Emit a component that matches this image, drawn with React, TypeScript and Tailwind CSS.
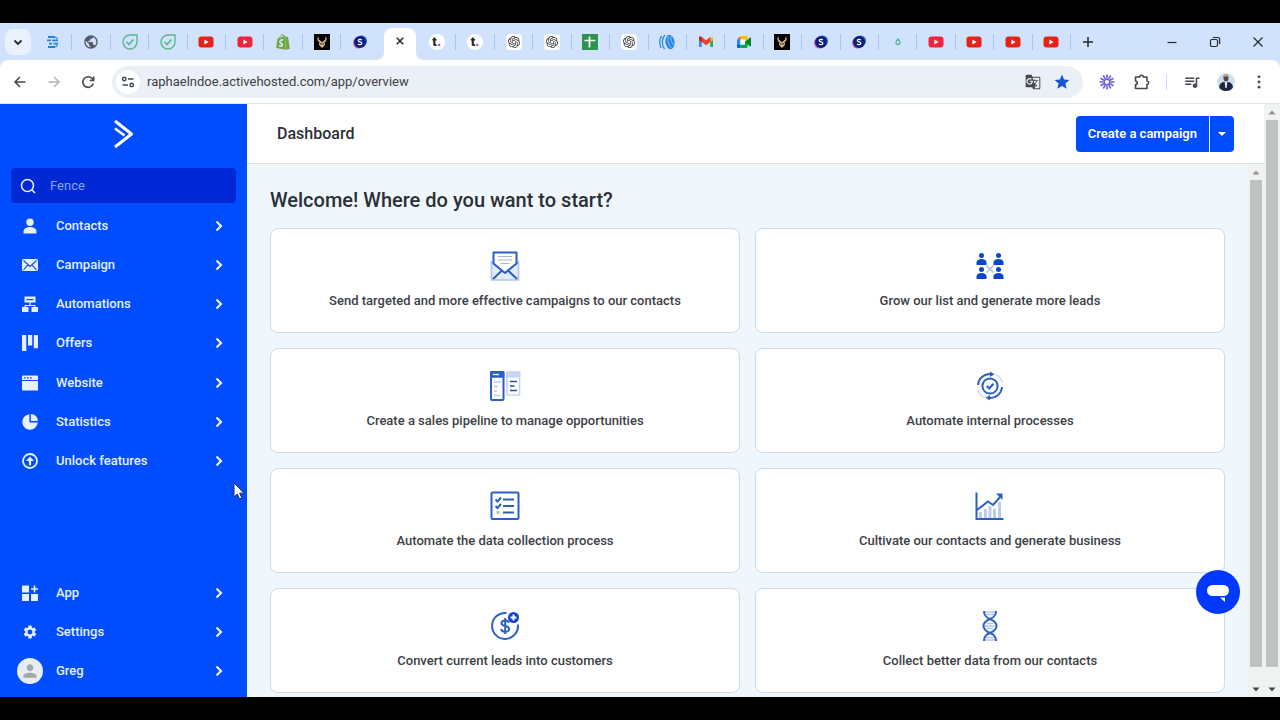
import type { ReactNode } from "react";
import { FaShopify } from "react-icons/fa";
import { SiOpenai } from "react-icons/si";
import { MdQueueMusic, MdGTranslate, MdStar, MdSettings, MdPerson, MdPublic } from "react-icons/md";

/* ---------- favicons ---------- */

const DocsFav = () => (
  <svg viewBox="0 0 16 16" className="size-4">
    <g stroke="#2583d8" strokeWidth="1.8" fill="none">
      <path d="M3 3h7M2 6.400h4M7 6.400h6M4 9.600h3M8.500 9.600H13M3 13h7" />
      <path d="M9.500 3c1.500 0 2.500 1 3 2.400M9.500 13c1.500 0 2.500-1 3-2.400" strokeWidth="1.200" />
    </g>
  </svg>
);
const GlobeFav = () => <MdPublic className="size-4 text-[#545b66]" />;
const CheckFav = () => (
  <svg viewBox="0 0 16 16" className="size-4" fill="none" stroke="#5cb88a" strokeWidth="1.4">
    <path d="M8 1h7v7a7 7 0 1 1-7-7z" />
    <path d="m4.600 8 2.400 2.500 4.400-5" strokeWidth="1.8" />
  </svg>
);
const TubeFav = ({ tone }: { tone: string }) => (
  <svg viewBox="0 0 16 12" className="h-3 w-4">
    <rect x="0.5" y="0.5" width="15" height="11" rx="3" fill={tone} />
    <path d="M6.400 3.600v4.800L10.600 6z" fill="#fff" />
  </svg>
);
const RedTube = () => <TubeFav tone="#e62117" />;
const PinkTube = () => <TubeFav tone="#ef233c" />;
const ShopFav = () => <FaShopify className="size-4 text-[#6fa83c]" />;
const BullFav = () => (
  <svg viewBox="0 0 16 16" className="size-4">
    <path fill="#000" d="M0 0h16v16H0z" />
    <path d="M4.500 3.500c-1 1.800-.4 3.200 1.200 4M11.500 3.500c1 1.800.4 3.200-1.200 4M5 6.500 8 9l3-2.500M5.800 8.500v2.200L8 13l2.200-2.300V8.500M8 8.500v4" fill="none" stroke="#d9b98c" strokeWidth="1.400" />
  </svg>
);
const SFav = () => (
  <svg viewBox="0 0 16 16" className="size-4">
    <circle cx="6.500" cy="9" r="5.500" fill="#d0659a" />
    <circle cx="9.500" cy="7" r="5.500" fill="#2463c7" />
    <circle cx="8" cy="8" r="6" fill="#0c1f80" />
    <path d="M9.800 6C9 5 6.300 5 6.300 6.700 6.300 8.300 9.800 7.600 9.800 9.300 9.800 11 7 11 6 9.900" fill="none" stroke="#fff" strokeWidth="1.300" />
  </svg>
);
const TFav = () => (
  <span className="flex size-4 items-center justify-center rounded-full bg-white font-['Inter',sans-serif] text-xs leading-none font-extrabold text-[#222]">
    t<span className="text-[#e0318c]">.</span>
  </span>
);
const AiFav = () => (
  <span className="flex size-4 items-center justify-center rounded-sm bg-white">
    <SiOpenai className="size-3 text-[#333]" />
  </span>
);
const SheetFav = () => (
  <svg viewBox="0 0 16 16" className="size-4">
    <path fill="#2c9350" d="M0 0h16v16H0z" />
    <path d="M7.500 2.500v11M2.500 6.500h11" stroke="#fff" strokeWidth="1.700" />
  </svg>
);
const WaveFav = () => (
  <svg viewBox="0 0 16 16" className="size-4" fill="none" stroke="#2587e8">
    <ellipse cx="11" cy="8" rx="4.500" ry="7.200" fill="#2587e8" stroke="none" transform="rotate(-8 11 8)" />
    <path d="M6 1C2.500 4.500 2.500 11 5.500 15M2.500 2C.2 5 .2 10.500 2 14" strokeWidth="1.300" />
    <path d="M9.500 2c-1.500 4 0 9 3 12M12 1.500c-.6 3 .4 7 2.500 9.500" stroke="#b9d9fa" strokeWidth=".7" />
  </svg>
);
const MailFav = () => (
  <svg viewBox="0 0 16 12" className="h-3 w-4">
    <path d="M1 1.800V11h2.800V5z" fill="#4285f4" />
    <path d="M15 1.800V11h-2.800V5z" fill="#34a853" />
    <path d="M12.200 5V2L15 1.200V4l-2.800 2.400z" fill="#fbbc04" />
    <path d="M1 4V1.800C1 .4 2.600 0 3.600.8L8 4.200 12.400.8l.2 5.200L8 9.200 3.800 6z" fill="#ea4335" />
    <path d="M1 4V1.800C1 .9 2 .4 3 .7l.8 1.200v4.300z" fill="#c5221f" />
  </svg>
);
const MeetFav = () => (
  <svg viewBox="0 0 16 14" className="h-3.5 w-4">
    <path d="M4.500 1v3.800H1z" fill="#ea4335" />
    <path d="M4.500 1H10c1 0 1.600.4 1.600 1.600V6L9 7V4.500H4.500z" fill="#fbbc04" />
    <path d="M1 4.800h3.500v5H1z" fill="#2684fc" />
    <path d="M1 9.500h3.500V13H2.300C1.400 13 1 12.500 1 11.700z" fill="#0066da" />
    <path d="M4.500 4.500H9v5.300H4.500z" fill="#fff" />
    <path d="M4.500 9.800H9V7l2.600-1v5.500c0 1-.6 1.500-1.600 1.500H4.500z" fill="#00ac47" />
    <path d="M9 7l4.800-4.200c.6-.4 1.200-.2 1.200.6v7.200c0 .8-.6 1-1.200.6z" fill="#00832d" />
  </svg>
);
const DropFav = () => (
  <svg viewBox="0 0 16 16" className="size-4">
    <path d="M8 5c1.200 1.400 2 2.400 2 3.600a2 2 0 0 1-4 0C6 7.400 6.800 6.400 8 5z" fill="none" stroke="#55b59a" strokeWidth="1.300" />
  </svg>
);
const CloseMark = () => (
  <svg viewBox="0 0 16 16" className="size-4" stroke="#26282c" strokeWidth="1.600">
    <path d="m4.800 4.800 6.400 6.400M11.200 4.800l-6.400 6.400" />
  </svg>
);

type Tab = { name: string; icon: () => ReactNode; active?: boolean };
const tabs: Tab[] = [
  { name: "Docs", icon: DocsFav },
  { name: "Web", icon: GlobeFav },
  { name: "Tasks", icon: CheckFav },
  { name: "Tasks", icon: CheckFav },
  { name: "Video", icon: RedTube },
  { name: "Video", icon: PinkTube },
  { name: "Shop", icon: ShopFav },
  { name: "Bull", icon: BullFav },
  { name: "S", icon: SFav },
  { name: "Close tab", icon: CloseMark, active: true },
  { name: "T", icon: TFav },
  { name: "T", icon: TFav },
  { name: "Chat", icon: AiFav },
  { name: "Chat", icon: AiFav },
  { name: "Sheet", icon: SheetFav },
  { name: "Chat", icon: AiFav },
  { name: "Wave", icon: WaveFav },
  { name: "Mail", icon: MailFav },
  { name: "Meet", icon: MeetFav },
  { name: "Bull", icon: BullFav },
  { name: "S", icon: SFav },
  { name: "S", icon: SFav },
  { name: "Drop", icon: DropFav },
  { name: "Video", icon: PinkTube },
  { name: "Video", icon: RedTube },
  { name: "Video", icon: RedTube },
  { name: "Video", icon: RedTube },
];

function TabStrip() {
  return (
    <div className="flex h-[37px] shrink-0 items-stretch bg-[#d1e2fc]">
      <div className="flex w-[34px] shrink-0 items-center pl-[5px]">
        <button aria-label="Search tabs" className="flex size-[26px] items-center justify-center rounded-lg bg-[#e9f1fd]">
          <svg viewBox="0 0 12 12" className="size-3" fill="none" stroke="#26282c" strokeWidth="1.800">
            <path d="m2.500 4.500 3.500 3.400 3.500-3.400" />
          </svg>
        </button>
      </div>
      <div className="flex min-w-0 flex-1">
        {tabs.map((tab, i) => {
          const Icon = tab.icon;
          if (tab.active) {
            return (
              <div key={i} className="flex flex-1 items-end">
                <svg viewBox="0 0 8 8" className="-ml-1 size-2 shrink-0" fill="#fff">
                  <path d="M8 0v8H0c5 0 8-3 8-8z" />
                </svg>
                <button aria-label={tab.name} className="flex h-8 min-w-0 flex-1 items-center justify-center rounded-t-lg bg-white pb-1.5">
                  <Icon />
                </button>
                <svg viewBox="0 0 8 8" className="-mr-1.5 size-2 shrink-0" fill="#fff">
                  <path d="M0 0v8h8C3 8 0 5 0 0z" />
                </svg>
              </div>
            );
          }
          const divided = !tabs[i + 1]?.active;
          return (
            <div key={i} className="flex flex-1 items-center">
              <button aria-label={tab.name} className="flex flex-1 justify-center">
                <Icon />
              </button>
              <span className={divided ? "h-4 w-px bg-[#a9c3f2]" : "h-4 w-px"} />
            </div>
          );
        })}
      </div>
      <div className="flex w-[209px] shrink-0 items-center justify-between pr-3.5 pl-[9px] text-[#26282c]">
        <button aria-label="New tab">
          <svg viewBox="0 0 16 16" className="size-4" stroke="currentColor" strokeWidth="1.500">
            <path d="M8 3v10M3 8h10" />
          </svg>
        </button>
        <div className="flex items-center gap-[27px]">
          <button aria-label="Minimize">
            <svg viewBox="0 0 16 16" className="size-4" stroke="currentColor" strokeWidth="1.200">
              <path d="M3.500 8.500h9" />
            </svg>
          </button>
          <button aria-label="Restore">
            <svg viewBox="0 0 16 16" className="size-4" fill="none" stroke="currentColor" strokeWidth="1.200">
              <rect x="3.500" y="5.500" width="7" height="7" rx="1.500" />
              <path d="M5.800 3.500H11c1 0 1.600.6 1.600 1.600v5" />
            </svg>
          </button>
          <button aria-label="Close">
            <svg viewBox="0 0 16 16" className="size-4" stroke="currentColor" strokeWidth="1.200">
              <path d="m3.500 3.500 9 9M12.500 3.500l-9 9" />
            </svg>
          </button>
        </div>
      </div>
    </div>
  );
}

function Toolbar() {
  return (
    <div className="shrink-0 bg-[#d1e2fc]">
      <div className="flex h-11 items-center rounded-t-lg border-b border-[#dfe5ec] bg-white text-[#45494e]">
        <div className="flex w-[112px] shrink-0 items-center gap-[18px] pl-3">
          <button aria-label="Back">
            <svg viewBox="0 0 16 16" className="size-4" fill="none" stroke="currentColor" strokeWidth="1.500">
              <path d="M13.500 8H3.500M8 3 3 8l5 5" />
            </svg>
          </button>
          <button aria-label="Forward" className="text-[#b3b6ba]">
            <svg viewBox="0 0 16 16" className="size-4" fill="none" stroke="currentColor" strokeWidth="1.500">
              <path d="M2.500 8h10M8 3l5 5-5 5" />
            </svg>
          </button>
          <button aria-label="Reload">
            <svg viewBox="0 0 16 16" className="size-4" fill="none" stroke="currentColor" strokeWidth="1.600">
              <path d="M13.200 9.500A5.300 5.300 0 1 1 12 4.400L13.500 6" />
              <path d="M13.700 2.500v4H9.800" />
            </svg>
          </button>
        </div>
        <div className="flex h-8 min-w-0 flex-1 items-center rounded-full bg-[#ebf0f6] pr-3 pl-1">
          <button aria-label="View site information" className="flex size-6 shrink-0 items-center justify-center rounded-full bg-white">
            <svg viewBox="0 0 14 14" className="size-3.5" fill="none" stroke="currentColor" strokeWidth="1.500">
              <circle cx="3.300" cy="4" r="1.700" />
              <path d="M7 4h5.500M1.500 10H7" />
              <circle cx="10.700" cy="10" r="1.700" />
            </svg>
          </button>
          <input
            aria-label="Address"
            defaultValue="raphaelndoe.activehosted.com/app/overview"
            className="ml-[7px] min-w-0 flex-1 bg-transparent text-[13px] text-[#3d4146] outline-none"
          />
          <button aria-label="Translate">
            <MdGTranslate className="size-4" />
          </button>
          <button aria-label="Bookmark" className="ml-3">
            <MdStar className="size-[18px] text-[#1558d0]" />
          </button>
        </div>
        <div className="flex w-[197px] shrink-0 items-center pl-4">
          <button aria-label="Recorder">
            <svg viewBox="0 0 16 16" className="size-4" fill="none" stroke="#6a5cdb">
              <circle cx="8" cy="8" r="2.800" strokeWidth="1.500" />
              <path
                d="M11.500 8h4M4.500 8h-4M8 4.500v-4M8 11.500v4M11.030 6.250l3.460-2M4.970 9.750l-3.460 2M9.750 4.970l2-3.460M6.250 11.030l-2 3.460M6.250 4.970l-2-3.460M9.750 11.030l2 3.460M4.970 6.250l-3.460-2M11.030 9.750l3.460 2"
                strokeWidth="1.600"
              />
            </svg>
          </button>
          <button aria-label="Extensions" className="ml-[18px]">
            <svg viewBox="0 0 18 18" className="size-[18px]" fill="none" stroke="currentColor" strokeWidth="1.600" strokeLinejoin="round">
              <path d="M2.500 4h4.300a1.700 1.700 0 0 1 3.400 0H14v4a1.700 1.700 0 0 1 0 3.400v4.100H2.500v-4c2.300 0 2.300-3.500 0-3.500z" />
            </svg>
          </button>
          <span className="ml-[15px] h-4 w-px bg-[#c9daf6]" />
          <button aria-label="Media" className="ml-4">
            <MdQueueMusic className="size-[18px]" />
          </button>
          <button aria-label="Profile" className="ml-4">
            <svg viewBox="0 0 18 18" className="size-[18px]">
              <circle cx="9" cy="9" r="9" fill="#cfdeee" />
              <path d="M9 18c-4 0-6.400-2-7-4 .4-3 2.500-4.500 4.500-5h5c2 .5 4 2 4.500 5-.6 2-3 4-7 4z" fill="#1b2a3f" />
              <path d="M7.600 8.500h2.800L9.600 15H8.400z" fill="#e7eef6" />
              <ellipse cx="9" cy="4.800" rx="2.600" ry="3.600" fill="#5b463f" />
              <path d="M6.400 3.500C6.500.3 11.500.3 11.600 3.500z" fill="#b9a8a0" />
            </svg>
          </button>
          <button aria-label="Menu" className="ml-4">
            <svg viewBox="0 0 16 16" className="size-4" fill="currentColor">
              <circle cx="8" cy="2.800" r="1.400" />
              <circle cx="8" cy="8" r="1.400" />
              <circle cx="8" cy="13.200" r="1.400" />
            </svg>
          </button>
        </div>
      </div>
    </div>
  );
}

/* ---------- sidebar ---------- */

const Glyph = ({ children }: { children: ReactNode }) => (
  <svg viewBox="0 0 16 16" className="size-4" fill="currentColor">
    {children}
  </svg>
);

const primary: { label: string; icon: ReactNode }[] = [
  {
    label: "Contacts",
    icon: (
      <Glyph>
        <circle cx="8" cy="4.200" r="3.700" />
        <path d="M1.500 15.500v-2C1.500 10.600 4.500 9 8 9s6.500 1.600 6.500 4.500v2z" />
      </Glyph>
    ),
  },
  {
    label: "Campaign",
    icon: (
      <Glyph>
        <rect y="2" width="16" height="12" rx="1.500" />
        <path d="m1.500 3.500 6.500 6 6.500-6M1.500 12.800l4.300-4.600M14.500 12.800l-4.300-4.600" fill="none" stroke="#004cff" strokeWidth="1.100" />
      </Glyph>
    ),
  },
  {
    label: "Automations",
    icon: (
      <Glyph>
        <path d="M2.500.5h11v6h-11zM0 11h6.500v5H0zM9.500 11H16v5H9.500zM7.400 6h1.200v3h4.800v2h-1.200v-1H3.800v1H2.600V9h4.800z" />
        <path d="M4.500 3h7v1.200h-7z" fill="#004cff" />
      </Glyph>
    ),
  },
  {
    label: "Offers",
    icon: (
      <Glyph>
        <path d="M0 0h4.300v16H0zM6 0h4.200v10.500H6zM11.800 0H16v13.300h-4.200z" />
      </Glyph>
    ),
  },
  {
    label: "Website",
    icon: (
      <Glyph>
        <path d="M0 1.500A1 1 0 0 1 1 .5h14a1 1 0 0 1 1 1V5H0zM0 6h16v9.500H0z" />
        <path d="M2 2.200h1.600v1.200H2zM5 2.200h1.600v1.200H5zM8 2.200h1.600v1.200H8z" fill="#004cff" />
      </Glyph>
    ),
  },
  {
    label: "Statistics",
    icon: (
      <Glyph>
        <path d="M7.400.2A7.800 7.800 0 1 0 15.800 8.600H7.400z" />
        <path d="M8.900 0A7.200 7.200 0 0 1 16 7.100H8.900z" />
      </Glyph>
    ),
  },
  {
    label: "Unlock features",
    icon: (
      <Glyph>
        <circle cx="8" cy="8" r="7" fill="none" stroke="currentColor" strokeWidth="1.800" />
        <path d="M8 3.500 12 8H9.100v4.200H6.900V8H4z" />
      </Glyph>
    ),
  },
];

const secondary: { label: string; icon: ReactNode }[] = [
  {
    label: "App",
    icon: (
      <Glyph>
        <path d="M0 .5h7v7H0zM0 9h7v7H0zM9 9h7v7H9zM11.700.5h1.600v2.700H16v1.600h-2.700v2.700h-1.600V4.800H9V3.200h2.700z" />
      </Glyph>
    ),
  },
  { label: "Settings", icon: <MdSettings className="size-4" /> },
  {
    label: "Greg",
    icon: (
      <span className="flex size-[26px] items-center justify-center rounded-full bg-[#e8edf3] text-[#a3a7ad]">
        <MdPerson className="size-5" />
      </span>
    ),
  },
];

function NavItem({ label, icon }: { label: string; icon: ReactNode }) {
  return (
    <a href="#" className="flex items-center pr-[23px] pl-4">
      <span className="flex w-7 justify-center">{icon}</span>
      <span className="ml-3 flex-1">{label}</span>
      <svg viewBox="0 0 10 14" className="h-3.5 w-2.5" fill="none" stroke="currentColor" strokeWidth="2.200">
        <path d="m2.500 2.500 4.500 4.500-4.500 4.500" />
      </svg>
    </a>
  );
}

function Sidebar() {
  return (
    <aside className="flex w-[247px] shrink-0 flex-col bg-[#004cff] pb-1.5 text-[13px] leading-5 font-medium text-[#e6f0ff]">
      <div className="flex h-16 shrink-0 items-center justify-center pb-1">
        <svg viewBox="0 0 20 30" className="h-[30px] w-5" fill="none" stroke="#fff" strokeWidth="3">
          <path d="M1 2 17.500 15 1 28" strokeLinejoin="round" />
          <path d="m1 9.500 9.500 7" strokeWidth="2.600" />
        </svg>
      </div>
      <div className="mx-[11px] flex h-[35px] shrink-0 items-center rounded bg-[#0028d4] pl-2">
        <svg viewBox="0 0 18 18" className="size-[18px]" fill="none" stroke="#e6f0ff" strokeWidth="1.600">
          <circle cx="8.500" cy="8.500" r="6" />
          <path d="m12.800 12.800 3.200 3.200" />
        </svg>
        <input
          aria-label="Search"
          placeholder="Fence"
          className="ml-[13px] min-w-0 flex-1 bg-transparent font-normal outline-none placeholder:text-[#86a6f5]"
        />
      </div>
      <nav className="mt-[3px] grid h-[275px] shrink-0 auto-rows-fr">
        {primary.map((item) => (
          <NavItem key={item.label} {...item} />
        ))}
      </nav>
      <nav className="mt-auto grid h-[118px] shrink-0 auto-rows-fr">
        {secondary.map((item) => (
          <NavItem key={item.label} {...item} />
        ))}
      </nav>
    </aside>
  );
}

/* ---------- start cards ---------- */

const Art = ({ children }: { children: ReactNode }) => (
  <svg viewBox="0 0 32 32" className="size-8" fill="none" stroke="#2a5fc4" strokeWidth="1.700">
    {children}
  </svg>
);

const Bust = ({ x, y }: { x: number; y: number }) => (
  <g transform={`translate(${x} ${y})`} fill="#0b45cc" stroke="none">
    <circle cx="5" cy="2.500" r="2.500" />
    <path d="M0 12V9.500C0 7.200 2 6 5 6s5 1.200 5 3.500V12z" />
  </g>
);

const cards: { label: string; art: ReactNode }[] = [
  {
    label: "Send targeted and more effective campaigns to our contacts",
    art: (
      <Art>
        <path d="M2.500 12v18h27V12L16 23z" fill="#e4ebfb" stroke="#b5c6ec" />
        <path d="M4.500 13.500V2.500h23v11L16 23z" fill="#fff" strokeLinejoin="round" strokeWidth="2" />
        <path d="m4 29 9-8.500M28 29l-9-8.500" strokeWidth="2" />
        <path d="M9 6.500h14M9 10h14M11.500 13.500h9" stroke="#a9b6d2" strokeWidth="1.200" />
      </Art>
    ),
  },
  {
    label: "Grow our list and generate more leads",
    art: (
      <Art>
        <path d="m12.500 15.500 7 7M19.500 15.500l-7 7" stroke="#a9bce8" strokeWidth="1.500" />
        <Bust x={2.5} y={3} />
        <Bust x={19.5} y={3} />
        <Bust x={2.5} y={17} />
        <Bust x={19.5} y={17} />
      </Art>
    ),
  },
  {
    label: "Create a sales pipeline to manage opportunities",
    art: (
      <Art>
        <rect x="2" y="2" width="12.500" height="28" rx="1" strokeWidth="2" />
        <path d="M2 2h12.500v5H2z" fill="#2a5fc4" />
        <path d="M4 4.500h6" stroke="#fff" strokeWidth="1.400" />
        <path d="M5 12h7M5 16.500h4M5 21h3M5 25.500h6" stroke="#b8c7ea" strokeWidth="1.400" />
        <rect x="18" y="2" width="12.500" height="23" rx="1" stroke="#c9d6f2" />
        <path d="M18 2h12.500v5H18z" fill="#c9d6f2" stroke="#c9d6f2" />
        <path d="M21 11.500h7M21 16h4.500M21 20.500h7" stroke="#2d4f94" strokeWidth="1.600" />
      </Art>
    ),
  },
  {
    label: "Automate internal processes",
    art: (
      <Art>
        <circle cx="16" cy="16" r="7.600" strokeWidth="2" />
        <path d="m12.800 16 2.400 2.400 4.200-4.600" strokeWidth="2.200" />
        <path d="M4 15A12 12 0 0 1 17 4M28 17a12 12 0 0 1-13 11" strokeWidth="2" />
        <path d="m16 1.500 4.500 2.700L16 7zM16 30.500l-4.500-2.700L16 25z" fill="#2a5fc4" stroke="none" />
        <path d="M22 4.500A13 13 0 0 1 28.500 13M10 27.500A13 13 0 0 1 3.500 19" stroke="#c9d6f2" strokeWidth="1.300" />
      </Art>
    ),
  },
  {
    label: "Automate the data collection process",
    art: (
      <Art>
        <rect x="2.500" y="2.500" width="27" height="26.500" rx="1" strokeWidth="2" />
        <path d="M14 9.500h11M14 16h11M14 22.500h11" strokeWidth="2" />
        <path d="m6.500 9.500 2 2 3.500-4M6.500 16l2 2 3.500-4" strokeWidth="2" />
        <path d="M7.500 22.500h3" stroke="#b3bfd8" strokeWidth="3" />
      </Art>
    ),
  },
  {
    label: "Cultivate our contacts and generate business",
    art: (
      <Art>
        <path d="M6.500 28v-6M11.500 28v-9M16 28V16M20.500 28v-9M25.500 28V12" stroke="#bccbed" strokeWidth="3" />
        <path d="M2.500 2.500v26.500h27" strokeWidth="2" />
        <path d="m3 20 11-8.500 5 3.500 8-9" strokeWidth="2" />
        <path d="M22 3.500h6.500V10z" fill="#2a5fc4" stroke="none" />
      </Art>
    ),
  },
  {
    label: "Convert current leads into customers",
    art: (
      <Art>
        <path d="M17.500 3A13 13 0 1 0 29 14.500" strokeWidth="2" />
        <path d="M20 12.800c-.6-1.800-2-2.300-3.800-2.300-2.200 0-3.700 1-3.700 2.800 0 4 7.700 1.600 7.700 5.600 0 1.800-1.700 2.900-4 2.900-2 0-3.700-.8-4.200-2.800M16.200 8v16" strokeWidth="2" />
        <circle cx="24.500" cy="7.500" r="5.500" fill="#0b45cc" stroke="none" />
        <path d="M24.500 4.500v6M21.500 7.500h6" stroke="#fff" strokeWidth="2" />
      </Art>
    ),
  },
  {
    label: "Collect better data from our contacts",
    art: (
      <Art>
        <path d="M11 2h11M12 4.500h8M13 13.500h6M11 16h10M13 18.500h6M12 27.500h8M11 30h11" stroke="#b4c4ea" strokeWidth="1.300" />
        <path d="M10 1c0 5 2.500 6.500 6 8s6.500 3 6.500 7-3 5.500-6.500 7-6 3-6 8M22 1c0 5-2.500 6.500-6 8s-6.500 3-6.500 7 3 5.500 6.500 7 6 3 6 8" strokeWidth="2" />
      </Art>
    ),
  },
];

function Scrollbar() {
  return (
    <div aria-hidden="true" className="flex w-4 shrink-0 flex-col items-center bg-[#f1f2f2]">
      <svg viewBox="0 0 16 16" className="size-4 shrink-0" fill="#8f9193">
        <path d="m4.500 10.500 3.500-4 3.500 4z" />
      </svg>
      <div className="w-3 flex-1 bg-[#c0c1c1]" />
      <svg viewBox="0 0 16 30" className="h-[30px] w-4 shrink-0" fill="#45484a">
        <path d="m4.500 20.500 3.500 4 3.500-4z" />
      </svg>
    </div>
  );
}

function Content() {
  return (
    <div className="flex min-w-0 flex-1 flex-col bg-[#f0f7fc]">
      <header className="flex h-[60px] shrink-0 items-center justify-between border-b border-[#d8e0e8] bg-white px-[30px]">
        <h1 className="text-base font-medium">Dashboard</h1>
        <div className="flex h-9 overflow-hidden rounded bg-[#004cff] text-white">
          <button className="border-r border-white px-3 text-[13px] font-semibold">Create a campaign</button>
          <button aria-label="More campaign options" className="flex w-6 items-center justify-center">
            <svg viewBox="0 0 8 4" className="h-1 w-2" fill="currentColor">
              <path d="M0 0h8L4 4z" />
            </svg>
          </button>
        </div>
      </header>
      <div className="flex min-h-0 flex-1">
        <main className="min-w-0 flex-1 overflow-hidden px-[23px] pt-[22px]">
          <h2 className="text-xl leading-7 font-medium">Welcome! Where do you want to start?</h2>
          <div className="mt-3.5 grid grid-cols-2 gap-[15px]">
            {cards.map((card) => (
              <a
                key={card.label}
                href="#"
                className="flex h-[105px] flex-col items-center rounded-lg border border-[#cfdbe6] bg-white pt-[21px] text-[13px] leading-5 font-medium text-[#3c4046]"
              >
                {card.art}
                <span className="mt-[9px]">{card.label}</span>
              </a>
            ))}
          </div>
        </main>
        <Scrollbar />
      </div>
    </div>
  );
}

export default function App() {
  return (
    <div className="relative flex h-screen flex-col bg-black py-[23px] font-['Roboto',sans-serif] text-[#2b2f36]">
      <TabStrip />
      <Toolbar />
      <div className="flex min-h-0 flex-1">
        <Sidebar />
        <Content />
        <Scrollbar />
      </div>
      <button aria-label="Open chat" className="absolute right-10 bottom-[106px] flex size-11 items-center justify-center rounded-full bg-[#0038ff]">
        <svg viewBox="0 0 24 20" className="h-5 w-6" fill="#fff">
          <rect x="1" y="3" width="22" height="11" rx="5.500" />
          <path d="M14 15.500h5V20z" />
        </svg>
      </button>
      <svg viewBox="0 0 12 18" className="pointer-events-none absolute top-[482px] left-[233px] h-[18px] w-3">
        <path d="M1 1v14l3.300-3 2.200 5 2.300-1-2.200-4.800H11z" fill="#fff" stroke="#222a48" />
      </svg>
    </div>
  );
}
